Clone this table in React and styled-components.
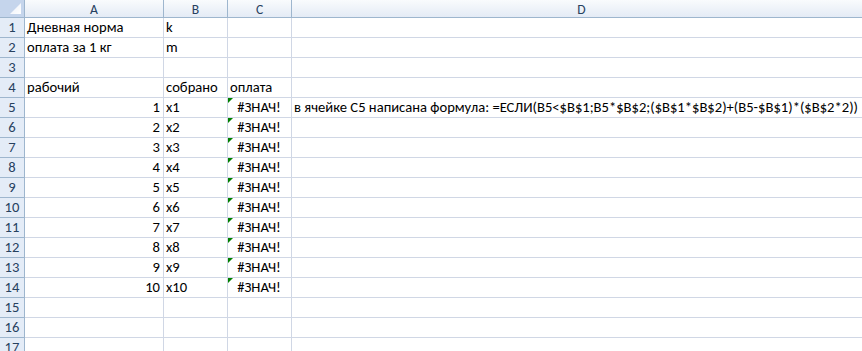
import React from "react";
import styled, { createGlobalStyle } from "styled-components";

const Global = createGlobalStyle`
  html, body { margin: 0; padding: 0; background: #fff; overflow: hidden; }
  body { width: 862px; height: 351px; }
`;

const Sheet = styled.div`
  display: grid;
  grid-template-columns: 25px 139px 64px 64px 580px;
  grid-auto-rows: 20px;
  grid-template-rows: 18px;
  width: 872px;
  font-family: Calibri, "Carlito", "Liberation Sans", Arial, sans-serif;
  font-size: 14.6px;
  color: #000;
`;

const Corner = styled.div`
  position: relative;
  background: #c5d5ec;
  border-right: 1px solid #9eb6ce;
  border-bottom: 1px solid #9eb6ce;
  box-sizing: border-box;
`;

const CornerTri = styled.svg`
  position: absolute;
  right: 3px;
  bottom: 3px;
`;

const ColHead = styled.div`
  box-sizing: border-box;
  background: linear-gradient(#f9fbfd, #e4ebf5);
  border-right: 1px solid #9eb6ce;
  border-bottom: 1px solid #9eb6ce;
  display: flex;
  align-items: center;
  justify-content: center;
  color: #27415f;
  font-size: 13.6px;
  padding-top: 1px;
`;

const RowHead = styled.div`
  box-sizing: border-box;
  background: #e4ecf7;
  border-right: 1px solid #9eb6ce;
  border-bottom: 1px solid #9eb6ce;
  display: flex;
  align-items: flex-end;
  justify-content: center;
  padding-bottom: 1px;
  color: #27415f;
  font-size: 14.6px;
  line-height: 17px;
`;

const Cell = styled.div`
  position: relative;
  box-sizing: border-box;
  border-right: 1px solid #d0d7e5;
  border-bottom: 1px solid #d0d7e5;
  display: flex;
  align-items: flex-end;
  justify-content: ${(p) =>
    p.$align === "right" ? "flex-end" : p.$align === "center" ? "center" : "flex-start"};
  padding: 0 3px 1px 2px;
  white-space: nowrap;
  overflow: visible;
  line-height: 17px;
  font-size: 14.6px;
`;

const Flag = styled.span`
  position: absolute;
  left: 0;
  top: 0;
  width: 0;
  height: 0;
  border-top: 5px solid #008000;
  border-right: 5px solid transparent;
`;

const cols = ["A", "B", "C", "D"];

const data = {
  1: ["Дневная норма", "k", "", ""],
  2: ["оплата за 1 кг", "m", "", ""],
  4: ["рабочий", "собрано", "оплата", ""],
};

const formula =
  "в ячейке С5 написана формула: =ЕСЛИ(B5<$B$1;B5*$B$2;($B$1*$B$2)+(B5-$B$1)*($B$2*2))";

export default function App() {
  const rows = [];
  for (let r = 1; r <= 17; r++) {
    rows.push(<RowHead key={`h${r}`}>{r}</RowHead>);
    if (r >= 5 && r <= 14) {
      const n = r - 4;
      rows.push(
        <Cell key={`a${r}`} $align="right">{n}</Cell>,
        <Cell key={`b${r}`}>x{n}</Cell>,
        <Cell key={`c${r}`} $align="center">
          <Flag />#ЗНАЧ!
        </Cell>,
        <Cell key={`d${r}`}>{r === 5 ? formula : ""}</Cell>
      );
    } else {
      const vals = data[r] || ["", "", "", ""];
      vals.forEach((v, i) =>
        rows.push(<Cell key={`${cols[i]}${r}`}>{v}</Cell>)
      );
    }
  }
  return (
    <>
      <Global />
      <Sheet>
        <Corner>
          <CornerTri width="11" height="11" viewBox="0 0 11 11">
            <defs>
              <linearGradient id="tri" x1="0" y1="0" x2="1" y2="1">
                <stop offset="0" stopColor="#e9eff8" />
                <stop offset="1" stopColor="#ffffff" />
              </linearGradient>
            </defs>
            <polygon points="11,0 11,11 0,11" fill="url(#tri)" />
          </CornerTri>
        </Corner>
        {cols.map((c) => (
          <ColHead key={c}>{c}</ColHead>
        ))}
        {rows}
      </Sheet>
    </>
  );
}
